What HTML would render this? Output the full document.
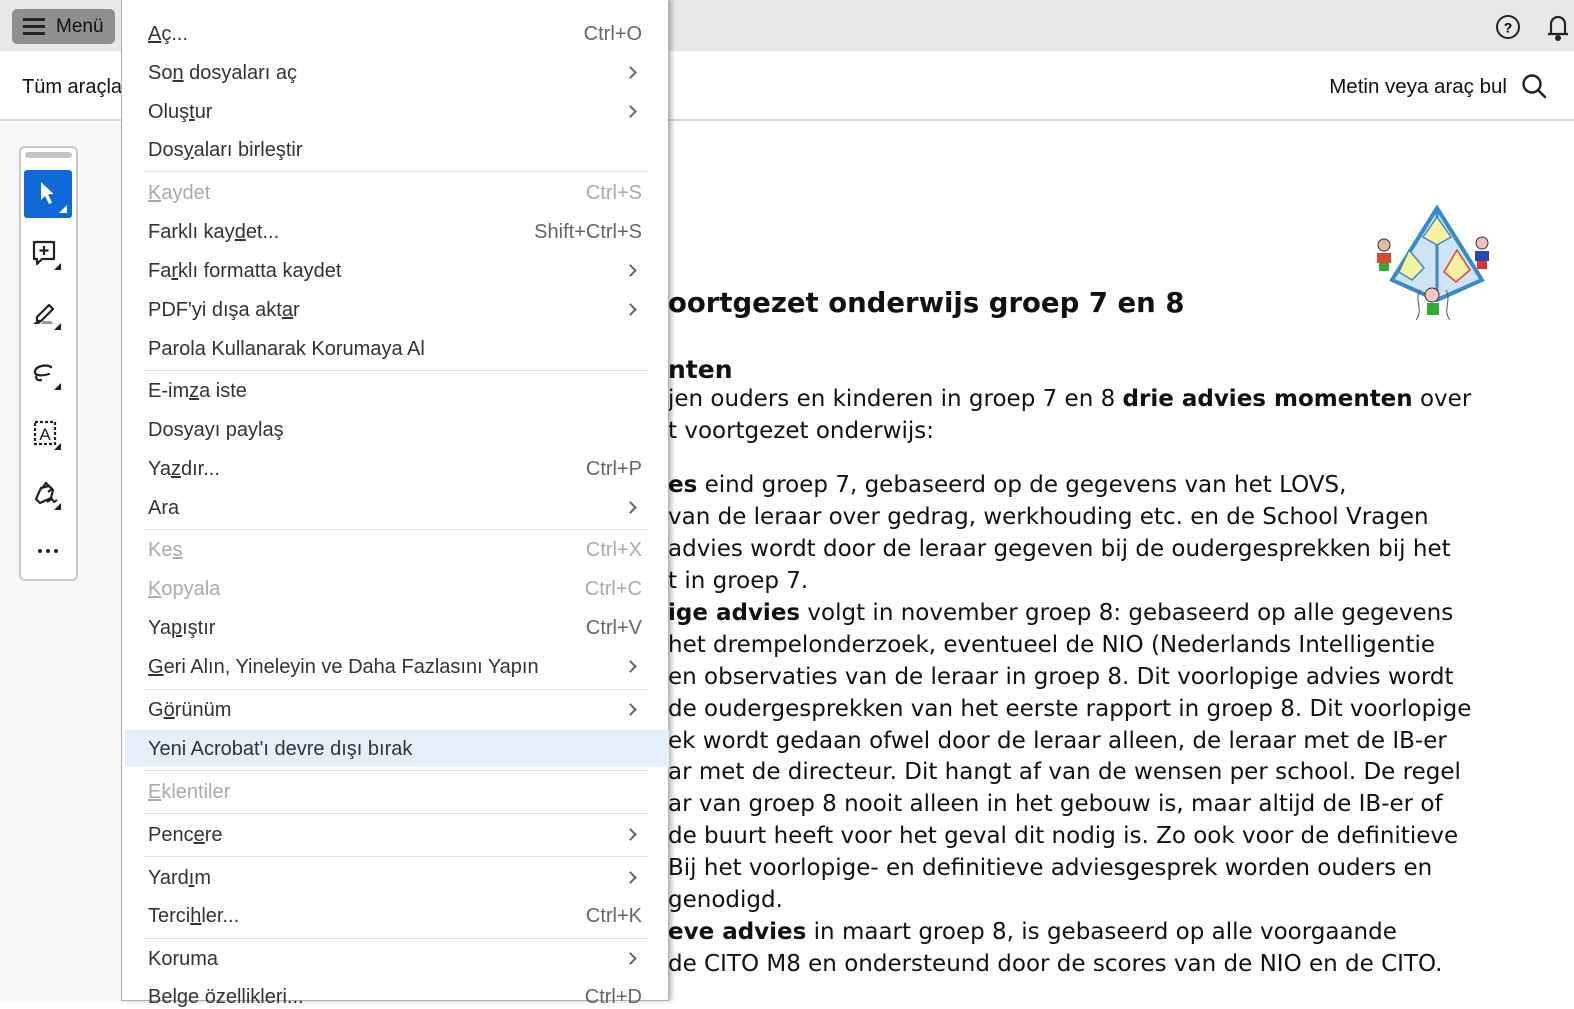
<!DOCTYPE html>
<html><head><meta charset="utf-8"><style>
*{margin:0;padding:0;box-sizing:border-box}
body{width:1574px;height:1001px;overflow:hidden;position:relative;background:#fff;font-family:"Liberation Sans",sans-serif}
.top{position:absolute;left:0;top:0;width:1574px;height:51px;background:#e8e8e8}
.bar2{position:absolute;left:0;top:51px;width:1574px;height:70px;background:#fff;border-bottom:2px solid #d4d4d4}
.left{position:absolute;left:0;top:123px;width:121px;height:878px;background:#f8f8f8}
.menubtn{position:absolute;left:12px;top:9px;width:103px;height:35px;background:#8f8f8f;border-radius:5px;font-size:19px;color:#111}
.tp{position:absolute;left:19px;top:146px;width:59px;height:435px;border:2px solid #c8c8c8;border-radius:6px;background:#fff}
.doc{position:absolute;font-family:"DejaVu Sans",Verdana,sans-serif;font-size:23px;color:#111;white-space:nowrap;left:668px}
.menu{position:absolute;left:121px;top:0;width:548px;height:1001px;background:#fff;border:1px solid #b0b0b0;border-top:none;box-shadow:3px 0 4px rgba(0,0,0,.25)}
.it{position:absolute;left:26px;font-size:20px;color:#333;white-space:nowrap;line-height:24px;margin-top:2px}
.it.d{color:#aaa}
.sc{position:absolute;right:26px;font-size:20px;color:#666;line-height:24px;margin-top:2px}
.sc.d{color:#aaa}
.ch{position:absolute;left:504px;width:9px;height:9px;border-right:2px solid #666;border-top:2px solid #666;transform:rotate(45deg);margin-top:2px}
.sep{position:absolute;left:21px;width:506px;height:1px;background:#e2e2e2}
u{text-decoration:underline}
</style></head><body>
<div class="top"></div>
<div class="bar2"></div>
<div class="left"></div>
<div class="menubtn">
 <div style="position:absolute;left:11px;top:9px;width:22px;height:3px;background:#222;box-shadow:0 7px 0 #222,0 14px 0 #222"></div>
 <span style="position:absolute;left:44px;top:7px">Menü</span>
</div>
<div style="position:absolute;left:22px;top:76px;font-size:20px;color:#111">Tüm araçlar</div>
<div style="position:absolute;right:67px;top:75px;font-size:20.5px;color:#111">Metin veya araç bul</div>
<svg style="position:absolute;left:1520px;top:72px" width="30" height="30" viewBox="0 0 30 30"><circle cx="12" cy="12" r="8.5" fill="none" stroke="#222" stroke-width="2.4"/><path d="M18 18l7 7" stroke="#222" stroke-width="2.6" stroke-linecap="round"/></svg>
<svg style="position:absolute;left:1494px;top:13px" width="28" height="28"><circle cx="14" cy="14" r="11" fill="none" stroke="#222" stroke-width="2"/><text x="14" y="19.5" font-size="14" font-weight="bold" text-anchor="middle" font-family="Liberation Sans">?</text></svg>
<svg style="position:absolute;left:1543px;top:11px" width="31" height="32"><path d="M5 23h20M8 23V13a7 7 0 0 1 14 0v10" fill="none" stroke="#222" stroke-width="2.2"/><circle cx="15" cy="27" r="3" fill="#222"/></svg>

<div class="tp">
 <div style="position:absolute;left:4px;top:4px;width:47px;height:6px;background:#c4c4c4;border-radius:3px"></div>
 <div style="position:absolute;left:3px;top:22px;width:48px;height:48px;background:#1069d8;border-radius:3px">
  <svg width="48" height="48"><path d="M17 12l0 18 4-4 4 8 3-1.5-4-8 5.5-0.5z" fill="#fff"/><path d="M43 35v8h-8z" fill="#fff"/></svg>
 </div>
 <svg style="position:absolute;left:8px;top:90px" width="40" height="40"><path d="M5 4h20v17H13l-5 5v-5H5z" fill="none" stroke="#222" stroke-width="2.2" stroke-linejoin="round"/><path d="M15 8v9M10.5 12.5h9" stroke="#222" stroke-width="2.2"/><path d="M32 25v7h-7z" fill="#222"/></svg>
 <svg style="position:absolute;left:8px;top:150px" width="40" height="40"><path d="M8 19l12-12 4 4-12 12H8z" fill="none" stroke="#222" stroke-width="2.2" stroke-linejoin="round"/><path d="M4 26l4-3 4 1-2 2z" fill="#222"/><path d="M12 26h12l-2-3H14z" fill="#999"/><path d="M32 25v7h-7z" fill="#222"/></svg>
 <svg style="position:absolute;left:8px;top:210px" width="40" height="40"><path d="M22 9c-5-3-16-1-16 5 0 4 8 4 14 2M8 17c-2 3 0 6 4 5" fill="none" stroke="#222" stroke-width="2.2" stroke-linecap="round"/><path d="M32 25v7h-7z" fill="#222"/></svg>
 <svg style="position:absolute;left:8px;top:270px" width="40" height="40"><rect x="6" y="4" width="20" height="22" fill="none" stroke="#222" stroke-width="2.2" stroke-dasharray="3 2"/><text x="16" y="22" font-size="17" text-anchor="middle" font-family="Liberation Sans" fill="#222">A</text><path d="M32 25v7h-7z" fill="#222"/></svg>
 <svg style="position:absolute;left:8px;top:330px" width="40" height="40"><path d="M7 21l5-11 8-2 4 4-2 8-11 5z" fill="none" stroke="#222" stroke-width="2.2" stroke-linejoin="round"/><path d="M14 9l3-4 6 6-4 3" fill="none" stroke="#222" stroke-width="2.2"/><path d="M18 24l5-3 2 3 3-2" fill="none" stroke="#222" stroke-width="2"/><path d="M32 25v7h-7z" fill="#222"/></svg>
 <div style="position:absolute;left:17px;top:401px;width:4px;height:4px;border-radius:2px;background:#222;box-shadow:8px 0 0 #222,16px 0 0 #222"></div>
</div>

<div class="doc" style="top:287px;font-size:27.5px;font-weight:bold">oortgezet onderwijs groep 7 en 8</div>
<div class="doc" style="top:355px;font-size:25px;font-weight:bold">nten</div>
<div class="doc" style="top:386px">jen ouders en kinderen in groep 7 en 8 <b>drie advies momenten</b> over</div>
<div class="doc" style="top:418px">t voortgezet onderwijs:</div>
<div class="doc" style="top:472px"><b>es</b> eind groep 7, gebaseerd op de gegevens van het LOVS,</div>
<div class="doc" style="top:504px">van de leraar over gedrag, werkhouding etc. en de School Vragen</div>
<div class="doc" style="top:536px">advies wordt door de leraar gegeven bij de oudergesprekken bij het</div>
<div class="doc" style="top:568px">t in groep 7.</div>
<div class="doc" style="top:600px"><b>ige advies</b> volgt in november groep 8: gebaseerd op alle gegevens</div>
<div class="doc" style="top:632px">het drempelonderzoek, eventueel de NIO (Nederlands Intelligentie</div>
<div class="doc" style="top:664px">en observaties van de leraar in groep 8. Dit voorlopige advies wordt</div>
<div class="doc" style="top:696px">de oudergesprekken van het eerste rapport in groep 8. Dit voorlopige</div>
<div class="doc" style="top:728px">ek wordt gedaan ofwel door de leraar alleen, de leraar met de IB-er</div>
<div class="doc" style="top:759px">ar met de directeur. Dit hangt af van de wensen per school. De regel</div>
<div class="doc" style="top:791px">ar van groep 8 nooit alleen in het gebouw is, maar altijd de IB-er of</div>
<div class="doc" style="top:823px">de buurt heeft voor het geval dit nodig is. Zo ook voor de definitieve</div>
<div class="doc" style="top:855px"> Bij het voorlopige- en definitieve adviesgesprek worden ouders en</div>
<div class="doc" style="top:887px">genodigd.</div>
<div class="doc" style="top:919px"><b>eve advies</b> in maart groep 8, is gebaseerd op alle voorgaande</div>
<div class="doc" style="top:951px"> de CITO M8 en  ondersteund door de scores van de NIO en de CITO.</div>

<svg style="position:absolute;left:1362px;top:205px" width="140" height="125" viewBox="0 0 140 125">
 <path d="M75 3L30 75 75 95 120 75z" fill="#cfe3f3" stroke="#3a8ac8" stroke-width="4"/>
 <path d="M75 3V95" stroke="#3a8ac8" stroke-width="3"/>
 <path d="M75 12l-14 20 14 8 14-8z" fill="#f6f3a0" stroke="#3a8ac8" stroke-width="1.5"/>
 <path d="M47 45l-10 22 13 8 12-12z" fill="#f6f3a0" stroke="#3a8ac8" stroke-width="1.5"/>
 <path d="M95 45l-13 22 12 10 14-12z" fill="#f6f3a0" stroke="#e04040" stroke-width="1.5"/>
 <circle cx="22" cy="40" r="6" fill="#e8b8a0" stroke="#333"/><rect x="15" y="48" width="14" height="10" fill="#d43"/><rect x="17" y="58" width="10" height="8" fill="#3a3"/>
 <circle cx="120" cy="38" r="6" fill="#f0c0c0" stroke="#333"/><rect x="113" y="46" width="14" height="10" fill="#2848b0"/><rect x="115" y="56" width="10" height="8" fill="#d33"/>
 <circle cx="70" cy="90" r="7" fill="#f0c8c0" stroke="#333"/><rect x="65" y="98" width="12" height="12" fill="#3a3"/>
 <path d="M58 85c-6 10 4 20-4 30M84 85c6 10-4 20 4 30" fill="none" stroke="#555"/>
</svg>

<div class="menu">
 <div class="it" style="top:20px"><u>A</u>ç...</div><div class="sc" style="top:20px">Ctrl+O</div>
 <div class="it" style="top:59px">So<u>n</u> dosyaları aç</div><div class="ch" style="top:66px"></div>
 <div class="it" style="top:98px">Oluş<u>t</u>ur</div><div class="ch" style="top:105px"></div>
 <div class="it" style="top:136px">Dos<u>y</u>aları birleştir</div>
 <div class="sep" style="top:171px"></div>
 <div class="it d" style="top:179px"><u>K</u>aydet</div><div class="sc d" style="top:179px">Ctrl+S</div>
 <div class="it" style="top:218px">Farklı kay<u>d</u>et...</div><div class="sc" style="top:218px">Shift+Ctrl+S</div>
 <div class="it" style="top:257px">Fa<u>r</u>klı formatta kaydet</div><div class="ch" style="top:264px"></div>
 <div class="it" style="top:296px">PDF'yi dışa akt<u>a</u>r</div><div class="ch" style="top:303px"></div>
 <div class="it" style="top:335px">Parola Kullanarak Korumaya Al</div>
 <div class="sep" style="top:370px"></div>
 <div class="it" style="top:377px">E-im<u>z</u>a iste</div>
 <div class="it" style="top:416px">Dosyayı paylaş</div>
 <div class="it" style="top:455px">Ya<u>z</u>dır...</div><div class="sc" style="top:455px">Ctrl+P</div>
 <div class="it" style="top:494px">Ara</div><div class="ch" style="top:501px"></div>
 <div class="sep" style="top:529px"></div>
 <div class="it d" style="top:536px">Ke<u>s</u></div><div class="sc d" style="top:536px">Ctrl+X</div>
 <div class="it d" style="top:575px"><u>K</u>opyala</div><div class="sc d" style="top:575px">Ctrl+C</div>
 <div class="it" style="top:614px">Ya<u>p</u>ıştır</div><div class="sc" style="top:614px">Ctrl+V</div>
 <div class="it" style="top:653px"><u>G</u>eri Alın, Yineleyin ve Daha Fazlasını Yapın</div><div class="ch" style="top:660px"></div>
 <div class="sep" style="top:689px"></div>
 <div class="it" style="top:696px">G<u>ö</u>rünüm</div><div class="ch" style="top:703px"></div>
 <div style="position:absolute;left:3px;top:730px;width:544px;height:37px;background:#e5eff9"></div>
 <div class="it" style="top:735px">Yeni Acrobat'ı devre dışı bırak</div>
 <div class="sep" style="top:770px"></div>
 <div class="it d" style="top:778px"><u>E</u>klentiler</div>
 <div class="sep" style="top:813px"></div>
 <div class="it" style="top:821px">Penc<u>e</u>re</div><div class="ch" style="top:828px"></div>
 <div class="sep" style="top:856px"></div>
 <div class="it" style="top:864px">Yard<u>ı</u>m</div><div class="ch" style="top:871px"></div>
 <div class="it" style="top:902px">Terci<u>h</u>ler...</div><div class="sc" style="top:902px">Ctrl+K</div>
 <div class="sep" style="top:938px"></div>
 <div class="it" style="top:945px">Koruma</div><div class="ch" style="top:952px"></div>
 <div class="it" style="top:983px">Belge özellikleri...</div><div class="sc" style="top:983px">Ctrl+D</div>
</div>
</body></html>
